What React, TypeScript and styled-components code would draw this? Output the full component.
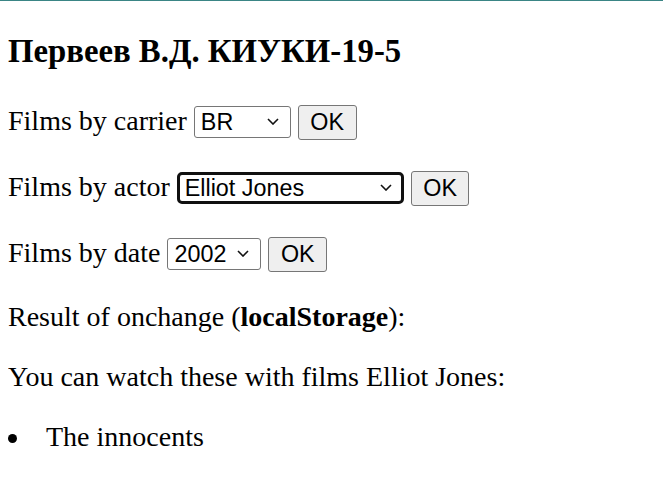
import * as React from 'react';
import styled, { createGlobalStyle } from 'styled-components';

const GlobalStyle = createGlobalStyle`
    html {
        border-top: 1px solid #3a8585;
    }
    body {
        margin: 32px 8px 8px;
        font-family: "Liberation Serif", "Times New Roman", serif;
        font-size: 28px;
        color: #000;
        background: #fff;
    }
`;

const Title = styled.h3`
    font-size: 1.17em;
    font-weight: bold;
    margin: 0 0 1em;
`;

const Row = styled.p<{ $form?: boolean }>`
    margin: 1em 0;
    padding: ${(p) => (p.$form ? '2px 0 1px' : '0')};
`;

const SelectWrap = styled.span`
    position: relative;
    display: inline-block;
`;

const Select = styled.select<{ $width: number; $focused?: boolean }>`
    appearance: none;
    box-sizing: border-box;
    width: ${(p) => p.$width}px;
    height: 32px;
    padding: 0 0 0 ${(p) => (p.$focused ? 5 : 6)}px;
    font-family: "Liberation Sans", Arial, sans-serif;
    font-size: 23.33px;
    color: #000;
    background: #fff;
    border: ${(p) => (p.$focused ? '3px solid #101010' : '1px solid #767676')};
    border-radius: ${(p) => (p.$focused ? '5px' : '3px')};
    outline: none;
    vertical-align: baseline;
`;

const Chevron = styled.svg`
    position: absolute;
    right: 12px;
    top: 50%;
    margin-top: -3px;
    width: 12px;
    height: 7px;
    pointer-events: none;
`;

const Button = styled.button`
    box-sizing: border-box;
    height: 35px;
    padding: 1px 11.5px;
    font-family: "Liberation Sans", Arial, sans-serif;
    font-size: 23.33px;
    color: #000;
    background: #efefef;
    border: 1px solid #767676;
    border-radius: 3px;
    vertical-align: baseline;
`;

const List = styled.ul`
    margin: 1em 0;
    padding: 0;
    list-style: none;
`;

const Item = styled.li`
    &::before {
        content: '';
        display: inline-block;
        width: 9px;
        height: 9px;
        border-radius: 50%;
        background: #000;
        margin: 0 29px 0 0;
        vertical-align: 3px;
    }
`;

type PickerProps = {
    width: number;
    value: string;
    options: string[];
    focused?: boolean;
};

const Picker = ({ width, value, options, focused }: PickerProps) => (
    <SelectWrap>
        <Select $width={width} $focused={focused} defaultValue={value}>
            {options.map((o) => (
                <option key={o}>{o}</option>
            ))}
        </Select>
        <Chevron viewBox="0 0 12 7">
            <path d="M1 1l5 5 5-5" fill="none" stroke="#111" strokeWidth="1.6" />
        </Chevron>
    </SelectWrap>
);

const App = () => (
    <>
        <GlobalStyle />
        <Title>Первеев В.Д. КИУКИ-19-5</Title>
        <Row $form>
            Films by carrier <Picker width={97} value="BR" options={['BR', 'DVD', 'VHS']} />{' '}
            <Button>OK</Button>
        </Row>
        <Row $form>
            Films by actor{' '}
            <Picker width={227} value="Elliot Jones" options={['Elliot Jones', 'Tom Hardy']} focused />{' '}
            <Button>OK</Button>
        </Row>
        <Row $form>
            Films by date <Picker width={94} value="2002" options={['2002', '2005', '2010']} />{' '}
            <Button>OK</Button>
        </Row>
        <Row>
            Result of onchange (<b>localStorage</b>):
        </Row>
        <Row>You can watch these with films Elliot Jones:</Row>
        <List>
            <Item>The innocents</Item>
        </List>
    </>
);

export default App;
